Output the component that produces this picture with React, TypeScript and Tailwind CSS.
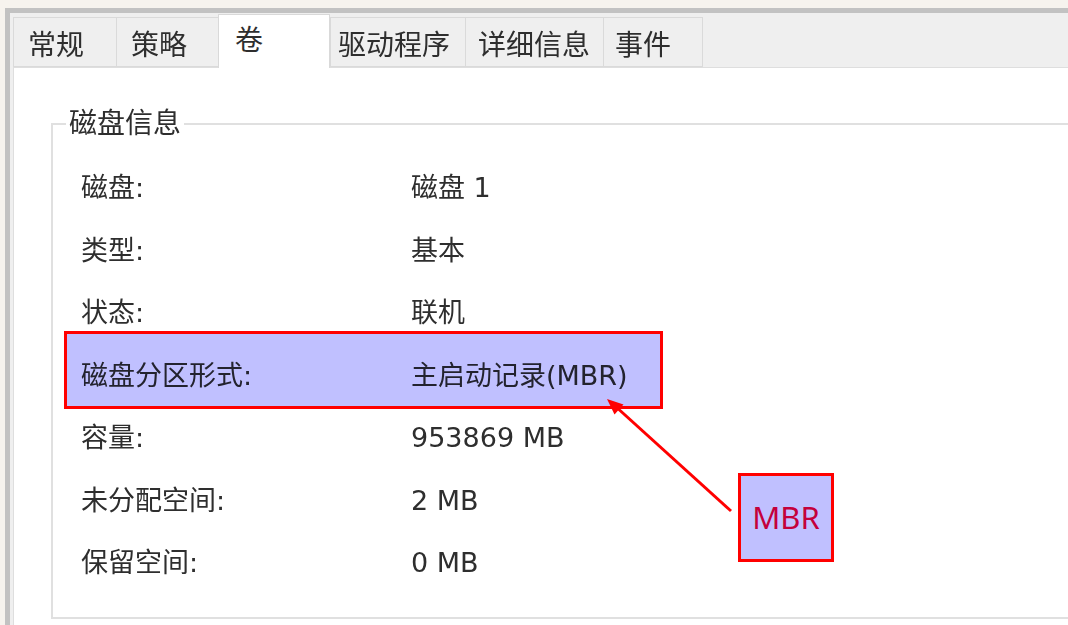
const tabs = [
  { label: "常规", cls: "w-[103px] pl-[14px]" },
  { label: "策略", cls: "w-[102px] pl-[14px]" },
  { label: "卷", cls: "w-[112px] pl-[16px]", active: true },
  { label: "驱动程序", cls: "w-[135px] pl-[7px]" },
  { label: "详细信息", cls: "w-[138px] pl-[12px]" },
  { label: "事件", cls: "w-[99px] pl-[11px]" },
];

const rows = [
  ["磁盘:", "磁盘 1"],
  ["类型:", "基本"],
  ["状态:", "联机"],
  ["磁盘分区形式:", "主启动记录(MBR)"],
  ["容量:", "953869 MB"],
  ["未分配空间:", "2 MB"],
  ["保留空间:", "0 MB"],
];

export default function App() {
  return (
    <div
      className="relative w-[1068px] h-[625px] overflow-hidden bg-[#f6f3ee] pt-[8px] pl-[5px] text-[#2e2e2e]"
      style={{ fontFamily: '"DejaVu Sans", "Noto Sans CJK SC", sans-serif' }}
    >
      {/* dialog frame */}
      <div className="h-full border-t-[5px] border-l-[5px] border-[#c2c2c2] bg-[#efefef] pl-[3px] flex flex-col">
        {/* tab strip */}
        <div className="flex items-end h-[54px] shrink-0">
          {tabs.map((t) =>
            t.active ? (
              <div
                key={t.label}
                className={`${t.cls} h-[54px] -mb-[1px] bg-white border border-b-0 border-[#d9d9d9] pt-[8px] text-[28px] leading-[36px] z-10`}
              >
                {t.label}
              </div>
            ) : (
              <div
                key={t.label}
                className={`${t.cls} h-[50px] border border-r-0 border-[#dadada] bg-[#efefef] pt-[10px] text-[28px] leading-[36px]`}
              >
                {t.label}
              </div>
            )
          )}
          <div className="h-[50px] border-l border-[#dadada]" />
        </div>

        {/* content panel */}
        <div className="flex-1 bg-white border-t border-l border-[#dedede] pl-[37px] pt-[55px]">
          <div className="relative border-2 border-r-0 border-[#e0e0e0] h-[496px] pl-[28px] pt-[32px]">
            <span className="absolute -top-[19px] left-[13px] bg-white px-[3px] text-[28px] leading-[36px]">
              磁盘信息
            </span>
            {rows.map(([k, v]) => (
              <div key={k} className="flex items-center h-[62.5px] text-[27px]">
                <span className="w-[330px]">{k}</span>
                <span>{v}</span>
              </div>
            ))}
          </div>
        </div>
      </div>

      {/* highlight annotation over the partition-style row */}
      <div className="absolute left-[64px] top-[331px] w-[599px] h-[78px] border-[3px] border-[#ff0000] bg-[#c0c0ff] mix-blend-multiply" />

      {/* arrow */}
      <svg className="absolute inset-0 pointer-events-none" width="1068" height="625">
        <line x1="731" y1="511" x2="614" y2="405" stroke="#ff0000" strokeWidth="3" />
        <polygon points="607,399 623.5,404.5 614.5,414.5" fill="#ff0000" />
      </svg>

      {/* MBR callout */}
      <div
        className="absolute left-[738px] top-[473px] w-[96px] h-[89px] border-[3px] border-[#ff0000] bg-[#c0c0ff] flex items-center justify-center text-[31px] text-[#c4003c]"
        style={{ fontFamily: '"Noto Sans", "Open Sans", sans-serif' }}
      >
        MBR
      </div>
    </div>
  );
}
